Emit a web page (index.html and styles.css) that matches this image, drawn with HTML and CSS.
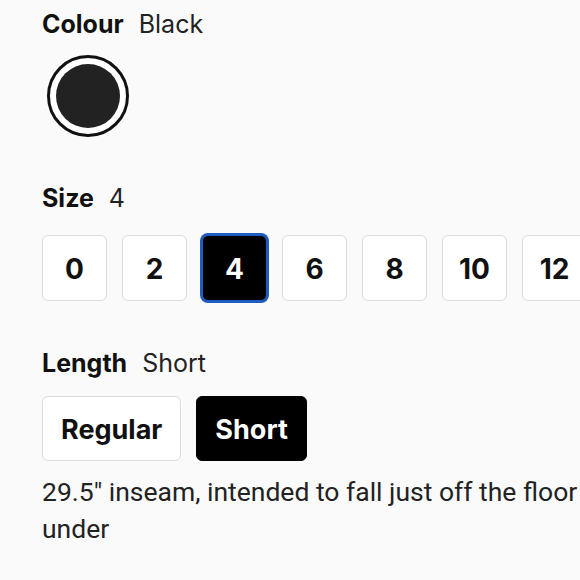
FILE: index.html
```html
<!DOCTYPE html>
<html lang="en">
<head>
<meta charset="utf-8">
<title>Product options</title>
<link rel="stylesheet" href="styles.css">
</head>
<body>
<main class="options">
  <section class="group group-colour">
    <div class="label"><span class="label-name">Colour</span><span class="label-value">Black</span></div>
    <div class="swatches">
      <button class="swatch is-selected" aria-label="Black"><span class="swatch-fill"></span></button>
    </div>
  </section>

  <section class="group group-size">
    <div class="label"><span class="label-name">Size</span><span class="label-value">4</span></div>
    <div class="size-row">
      <button class="opt size">0</button>
      <button class="opt size">2</button>
      <button class="opt size is-active is-focused">4</button>
      <button class="opt size">6</button>
      <button class="opt size">8</button>
      <button class="opt size">10</button>
      <button class="opt size">12</button>
    </div>
  </section>

  <section class="group group-length">
    <div class="label"><span class="label-name">Length</span><span class="label-value">Short</span></div>
    <div class="length-row">
      <button class="opt length">Regular</button>
      <button class="opt length is-active">Short</button>
    </div>
    <p class="desc">29.5" inseam, intended to fall just off the floor under</p>
  </section>
</main>
</body>
</html>
```
FILE: styles.css
```css
html, body {
  margin: 0;
  padding: 0;
  background: #fafafa;
  overflow: hidden;
}
body {
  font-family: Inter, "Liberation Sans", sans-serif;
  color: #111;
}
.options {
  padding: 12px 0 0 42px;
  width: 580px;
  box-sizing: border-box;
}
.label {
  display: flex;
  gap: 15px;
  font-size: 25px;
  line-height: 24px;
}
.label-name {
  font-weight: 700;
  color: #111;
}
.label-value {
  font-weight: 400;
  color: #222;
}
.group-colour .swatches {
  margin-top: 19px;
  padding-left: 5px;
}
.swatch {
  width: 82px;
  height: 82px;
  border-radius: 50%;
  border: 3px solid #111;
  background: #fff;
  padding: 6px;
  box-sizing: border-box;
  display: block;
  margin: 0;
}
.swatch-fill {
  display: block;
  width: 100%;
  height: 100%;
  border-radius: 50%;
  background: #222;
}
.group-size {
  margin-top: 49px;
}
.size-row {
  margin-top: 25px;
  display: flex;
  gap: 15px;
  flex-wrap: nowrap;
}
.opt {
  font-family: Inter, "Liberation Sans", sans-serif;
  font-weight: 700;
  font-size: 28px;
  color: #111;
  background: #fff;
  border: 1px solid #dcdcdc;
  border-radius: 6px;
  height: 66px;
  box-sizing: border-box;
  margin: 0;
  padding: 2px 0 0;
  display: flex;
  align-items: center;
  justify-content: center;
  flex: none;
}
.size {
  width: 65px;
}
.opt.is-active {
  background: #000;
  border-color: #000;
  color: #fff;
}
.opt.is-focused {
  border-color: #1f5cc0;
  box-shadow: 0 0 0 2px #1f5cc0;
}
.group-length {
  margin-top: 50px;
}
.length-row {
  margin-top: 21px;
  display: flex;
  gap: 15px;
}
.length {
  height: 65px;
  padding: 2px 18px 0;
  font-size: 27px;
}
.desc {
  margin: 12px 0 0;
  font-family: Roboto, "Liberation Sans", sans-serif;
  font-size: 26.5px;
  line-height: 37px;
  color: #222;
  width: 560px;
}
```
